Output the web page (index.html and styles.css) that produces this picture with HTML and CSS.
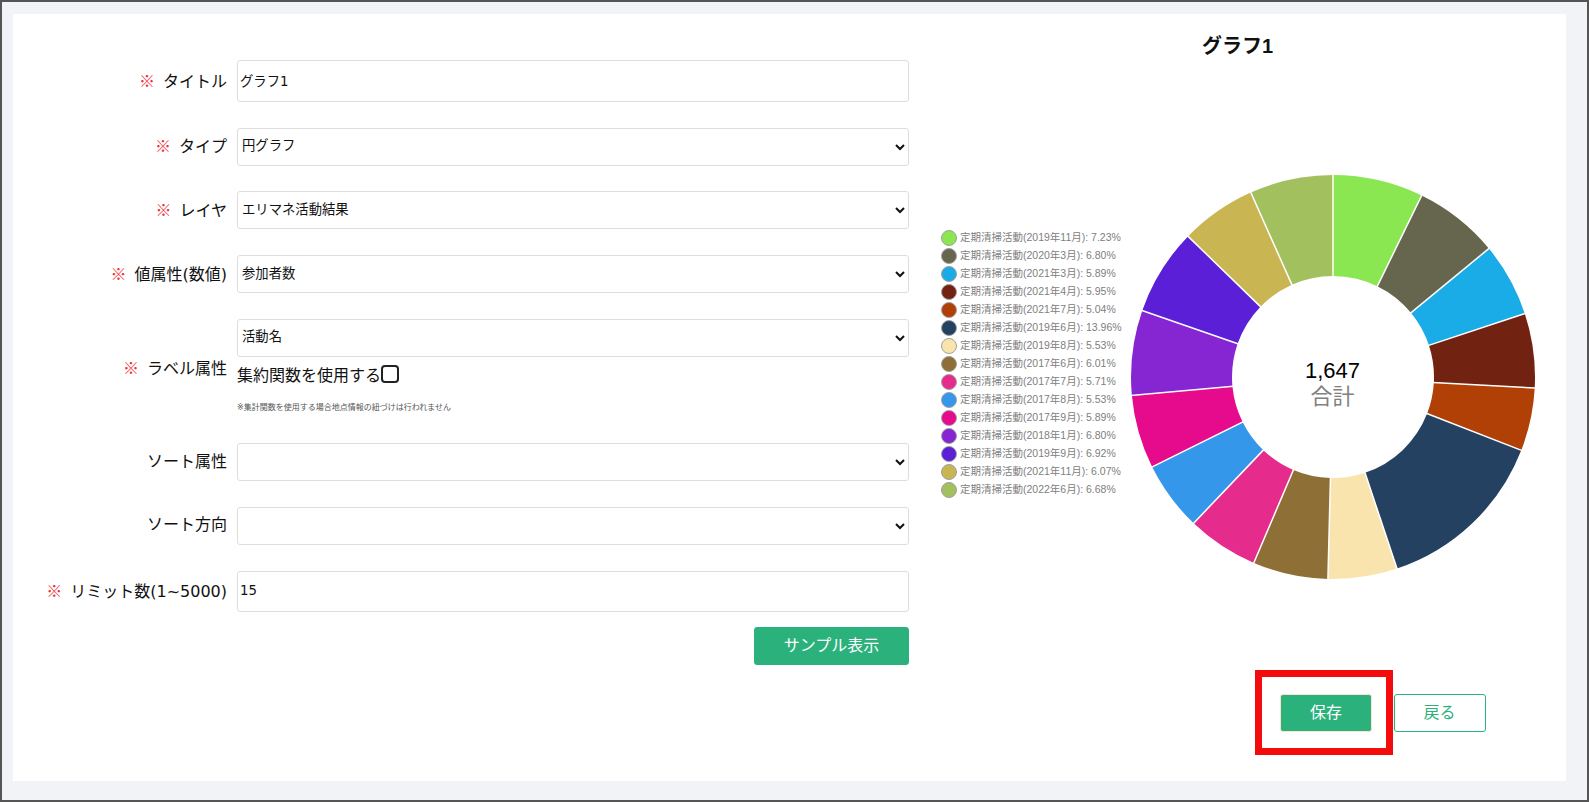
FILE: index.html
```html
<!DOCTYPE html>
<html lang="ja">
<head>
  <meta charset="UTF-8">
  <title>グラフ編集</title>
  <link rel="stylesheet" href="styles.css">
</head>
<body>
  <main class="card">
    <form class="form-col">
      <div class="fields">
        <label class="field-label" for="title"><span class="req">※</span>タイトル</label>
        <input class="control control-title" id="title" type="text" value="グラフ1">

        <label class="field-label" for="type"><span class="req">※</span>タイプ</label>
        <select class="control" id="type"><option>円グラフ</option></select>

        <label class="field-label" for="layer"><span class="req">※</span>レイヤ</label>
        <select class="control" id="layer"><option>エリマネ活動結果</option></select>

        <label class="field-label" for="value"><span class="req">※</span>値属性(数値)</label>
        <select class="control" id="value"><option>参加者数</option></select>

        <label class="field-label" for="label"><span class="req">※</span>ラベル属性</label>
        <div class="label-group">
          <select class="control" id="label"><option>活動名</option></select>
          <label class="check-row">集約関数を使用する<input class="check" type="checkbox"></label>
          <p class="note">※集計関数を使用する場合地点情報の紐づけは行われません</p>
        </div>

        <label class="field-label" for="sort">ソート属性</label>
        <select class="control" id="sort"><option></option></select>

        <label class="field-label" for="order">ソート方向</label>
        <select class="control" id="order"><option></option></select>

        <label class="field-label" for="limit"><span class="req">※</span>リミット数(1~5000)</label>
        <input class="control control-limit" id="limit" type="text" value="15">
      </div>
      <div class="form-actions">
        <button class="btn btn-sample" type="button">サンプル表示</button>
      </div>
    </form>

    <section class="chart-col">
      <h2 class="chart-title">グラフ1</h2>
      <div class="chart-row">
        <ul class="legend">
          <li><i class="dot c1"></i>定期清掃活動(2019年11月): 7.23%</li>
          <li><i class="dot c2"></i>定期清掃活動(2020年3月): 6.80%</li>
          <li><i class="dot c3"></i>定期清掃活動(2021年3月): 5.89%</li>
          <li><i class="dot c4"></i>定期清掃活動(2021年4月): 5.95%</li>
          <li><i class="dot c5"></i>定期清掃活動(2021年7月): 5.04%</li>
          <li><i class="dot c6"></i>定期清掃活動(2019年6月): 13.96%</li>
          <li><i class="dot c7"></i>定期清掃活動(2019年8月): 5.53%</li>
          <li><i class="dot c8"></i>定期清掃活動(2017年6月): 6.01%</li>
          <li><i class="dot c9"></i>定期清掃活動(2017年7月): 5.71%</li>
          <li><i class="dot c10"></i>定期清掃活動(2017年8月): 5.53%</li>
          <li><i class="dot c11"></i>定期清掃活動(2017年9月): 5.89%</li>
          <li><i class="dot c12"></i>定期清掃活動(2018年1月): 6.80%</li>
          <li><i class="dot c13"></i>定期清掃活動(2019年9月): 6.92%</li>
          <li><i class="dot c14"></i>定期清掃活動(2021年11月): 6.07%</li>
          <li><i class="dot c15"></i>定期清掃活動(2022年6月): 6.68%</li>
        </ul>
        <svg class="donut" width="404" height="404" viewBox="-202 -202 404 404">
          <g transform="rotate(-90)" fill="none" stroke-width="101">
            <circle r="151.5" pathLength="100.01" stroke="#8ae651" stroke-dasharray="7.23 92.78" stroke-dashoffset="0"></circle>
            <circle r="151.5" pathLength="100.01" stroke="#66664e" stroke-dasharray="6.8 93.21" stroke-dashoffset="-7.23"></circle>
            <circle r="151.5" pathLength="100.01" stroke="#1aace6" stroke-dasharray="5.89 94.12" stroke-dashoffset="-14.03"></circle>
            <circle r="151.5" pathLength="100.01" stroke="#722210" stroke-dasharray="5.95 94.06" stroke-dashoffset="-19.92"></circle>
            <circle r="151.5" pathLength="100.01" stroke="#b04006" stroke-dasharray="5.04 94.97" stroke-dashoffset="-25.87"></circle>
            <circle r="151.5" pathLength="100.01" stroke="#244161" stroke-dasharray="13.96 86.05" stroke-dashoffset="-30.91"></circle>
            <circle r="151.5" pathLength="100.01" stroke="#f9e4ad" stroke-dasharray="5.53 94.48" stroke-dashoffset="-44.87"></circle>
            <circle r="151.5" pathLength="100.01" stroke="#8e6f35" stroke-dasharray="6.01 94" stroke-dashoffset="-50.4"></circle>
            <circle r="151.5" pathLength="100.01" stroke="#e52c8c" stroke-dasharray="5.71 94.3" stroke-dashoffset="-56.41"></circle>
            <circle r="151.5" pathLength="100.01" stroke="#3597ea" stroke-dasharray="5.53 94.48" stroke-dashoffset="-62.12"></circle>
            <circle r="151.5" pathLength="100.01" stroke="#e60a8c" stroke-dasharray="5.89 94.12" stroke-dashoffset="-67.65"></circle>
            <circle r="151.5" pathLength="100.01" stroke="#8626d3" stroke-dasharray="6.8 93.21" stroke-dashoffset="-73.54"></circle>
            <circle r="151.5" pathLength="100.01" stroke="#5a1fd6" stroke-dasharray="6.92 93.09" stroke-dashoffset="-80.34"></circle>
            <circle r="151.5" pathLength="100.01" stroke="#c9b552" stroke-dasharray="6.07 93.94" stroke-dashoffset="-87.26"></circle>
            <circle r="151.5" pathLength="100.01" stroke="#a2c05e" stroke-dasharray="6.68 93.33" stroke-dashoffset="-93.33"></circle>
          </g>
          <!-- white lines between the slices -->
          <g class="seams">
            <line y1="-100" y2="-203"></line>
            <line y1="-100" y2="-203" transform="rotate(26.03)"></line>
            <line y1="-100" y2="-203" transform="rotate(50.51)"></line>
            <line y1="-100" y2="-203" transform="rotate(71.71)"></line>
            <line y1="-100" y2="-203" transform="rotate(93.13)"></line>
            <line y1="-100" y2="-203" transform="rotate(111.28)"></line>
            <line y1="-100" y2="-203" transform="rotate(161.53)"></line>
            <line y1="-100" y2="-203" transform="rotate(181.44)"></line>
            <line y1="-100" y2="-203" transform="rotate(203.08)"></line>
            <line y1="-100" y2="-203" transform="rotate(223.63)"></line>
            <line y1="-100" y2="-203" transform="rotate(243.54)"></line>
            <line y1="-100" y2="-203" transform="rotate(264.74)"></line>
            <line y1="-100" y2="-203" transform="rotate(289.22)"></line>
            <line y1="-100" y2="-203" transform="rotate(314.14)"></line>
            <line y1="-100" y2="-203" transform="rotate(335.99)"></line>
          </g>
          <text class="donut-total" x="-0.5" y="1" text-anchor="middle">1,647</text>
          <text class="donut-caption" x="-0.5" y="27" text-anchor="middle">合計</text>
        </svg>
      </div>
      <div class="chart-actions">
        <div class="save-wrap">
          <button class="btn btn-save" type="button">保存</button>
          <div class="highlight"></div>
        </div>
        <button class="btn btn-back" type="button">戻る</button>
      </div>
    </section>
  </main>
</body>
</html>
```

FILE: styles.css
```css
* {
  box-sizing: border-box;
}
html, body {
  height: 100%;
}
body {
  margin: 0;
  height: 802px;
  overflow: hidden;
  padding: 12px 21px 19px 11px;
  border: 2px solid #555;
  background: #f2f3f6;
  color: #111;
  font-family: "DejaVu Sans", "Noto Sans CJK JP", sans-serif;
}
.card {
  display: flex;
  height: 767px;
  background: #fff;
}

/* form */
.form-col {
  width: 896px;
  padding-top: 46px;
}
.fields {
  display: grid;
  grid-template-columns: 214px 672px;
  column-gap: 10px;
  row-gap: 25.7px;
  align-items: center;
}
.field-label {
  padding-bottom: 1px;
  font-size: 16px;
  line-height: 22px;
  font-weight: 400;
  text-align: right;
  white-space: nowrap;
}
.req {
  color: #f0303a;
  margin-right: 8px;
  font-family: "Noto Sans CJK JP", sans-serif;
}
.control {
  display: block;
  width: 100%;
  height: 38px;
  margin: 0;
  padding: 0 0 2px;
  border: 1px solid #ddd;
  border-radius: 3px;
  background: #fff;
  color: #111;
  font-family: "DejaVu Sans", "Noto Sans CJK JP", sans-serif;
  font-size: 13.33px;
}
input.control {
  padding: 0 2px 2px;
}
.control-title {
  height: 42px;
}
.control-limit {
  height: 41.3px;
}
.check-row {
  display: flex;
  align-items: center;
  height: 19px;
  margin-top: 8px;
  font-size: 16px;
}
.check {
  appearance: none;
  width: 18px;
  height: 18px;
  margin: 0;
  background: #fff;
  border: 2px solid #222;
  border-radius: 4px;
}
.note {
  margin: 18px 0 3.8px;
  font-size: 8px;
  line-height: 12px;
  color: #555;
}
.form-actions {
  display: flex;
  justify-content: flex-end;
  margin-top: 15px;
}

/* buttons */
.btn {
  width: 92px;
  height: 38px;
  padding: 0 0 3px;
  border: 1px solid #2bb17b;
  border-radius: 3px;
  background: #2bb17b;
  color: #fff;
  font-family: "Noto Sans CJK JP", sans-serif;
  font-size: 16px;
}
.btn-sample {
  width: 155px;
}
.btn-save {
  display: block;
  border-color: #fae3c6;
}
.btn-back {
  background: #fff;
  color: #2bb17b;
}

/* chart */
.chart-col {
  width: 594px;
  margin-left: 31.5px;
}
.chart-title {
  margin: 18px 0 0;
  font-size: 20px;
  line-height: 28px;
  font-weight: 700;
  text-align: center;
  color: #111;
  font-family: "Liberation Sans", "Noto Sans CJK JP", sans-serif;
}
.chart-row {
  display: flex;
  justify-content: space-between;
  align-items: flex-start;
  margin-top: 114.6px;
}
.legend {
  list-style: none;
  margin: 54.1px 0 0;
  padding: 0;
  color: #808080;
  font-family: "Liberation Sans", "Noto Sans CJK JP", sans-serif;
  font-size: 10.5px;
}
.legend li {
  display: flex;
  align-items: center;
  gap: 3.5px;
  height: 18px;
  padding-bottom: 2px;
  white-space: nowrap;
}
.dot {
  flex: none;
  width: 16px;
  height: 16px;
  margin-top: 2px;
  border: 1px solid #a0a0a0;
  border-radius: 50%;
}
.c1 { background: #8ae651; }
.c2 { background: #66664e; }
.c3 { background: #1aace6; }
.c4 { background: #722210; }
.c5 { background: #b04006; }
.c6 { background: #244161; }
.c7 { background: #f9e4ad; }
.c8 { background: #8e6f35; }
.c9 { background: #e52c8c; }
.c10 { background: #3597ea; }
.c11 { background: #e60a8c; }
.c12 { background: #8626d3; }
.c13 { background: #5a1fd6; }
.c14 { background: #c9b552; }
.c15 { background: #a2c05e; }
.donut {
  display: block;
  flex: none;
}
.seams line {
  stroke: #fff;
  stroke-width: 1.5;
}
.donut-total {
  font-family: "Liberation Sans", sans-serif;
  font-size: 22px;
  fill: #000;
}
.donut-caption {
  font-family: "Noto Sans CJK JP", sans-serif;
  font-size: 22px;
  fill: #808080;
}
.chart-actions {
  display: flex;
  justify-content: flex-end;
  gap: 21.5px;
  margin-top: 115.4px;
  padding-right: 49px;
}
.save-wrap {
  position: relative;
}
/* red box marking the button */
.highlight {
  position: absolute;
  top: -24px;
  right: -21px;
  bottom: -23px;
  left: -25px;
  border: 7px solid #f40b0b;
  pointer-events: none;
}
```
